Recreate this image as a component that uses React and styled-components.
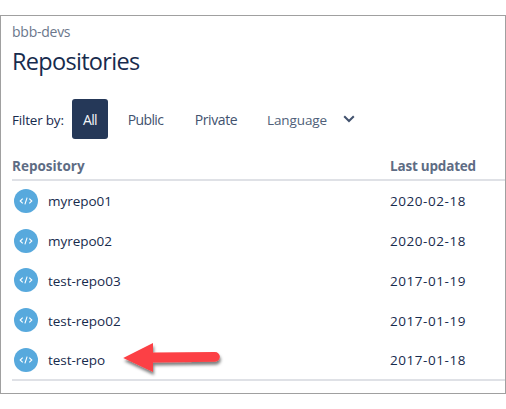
import React from "react";
import styled, { createGlobalStyle } from "styled-components";

const GlobalStyle = createGlobalStyle`
  * { box-sizing: border-box; }
  body { margin: 0; background: #fff; }
`;

const Page = styled.div`
  height: 409px;
  padding-top: 15px;
  font-family: "Open Sans", "Noto Sans", sans-serif;
  font-size: 13.5px;
  color: #172b4d;
  overflow: hidden;
`;

const Panel = styled.main`
  width: 506px;
  height: 379px;
  border: 1px solid #a0a0a0;
  padding: 6px 0 0 11px;
`;

const Label = styled.span`
  display: inline-block;
  white-space: nowrap;
  letter-spacing: ${(p) => p.$spacing || 0}px;
`;

const Owner = styled.div`
  height: 20px;
  line-height: 20px;
  font-size: 14px;
  color: #6b778c;
`;

const Title = styled.h1`
  margin: 2px 0 0;
  height: 34px;
  font-size: 23.5px;
  line-height: 34px;
  font-weight: 400;
`;

const Filters = styled.div`
  display: flex;
  align-items: center;
  height: 40px;
  margin-top: 21px;
`;

const FilterLabel = styled.div`
  width: 60px;
  padding-top: 1px;
`;

const FilterButton = styled.button`
  width: ${(p) => p.$width}px;
  height: 40px;
  padding: 0;
  border: 0;
  border-radius: 3px;
  font: inherit;
  font-size: 14px;
  text-align: center;
  color: ${(p) => (p.$active ? "#f4f5f7" : "#42526e")};
  background: ${(p) => (p.$active ? "#253858" : "transparent")};
`;

const LanguageSelect = styled.button`
  display: flex;
  align-items: center;
  justify-content: space-between;
  width: 88px;
  margin-left: 18px;
  padding: 1px 0 0;
  border: 0;
  background: none;
  font: inherit;
  color: #505f79;
`;

const Table = styled.section`
  margin-top: 17px;
  border-bottom: 2px solid #dfe1e6;
`;

const HeaderRow = styled.div`
  display: grid;
  grid-template-columns: 378px 1fr;
  height: 25px;
  line-height: 20px;
  border-bottom: 2px solid #dfe1e6;
  font-weight: 700;
  font-size: 13.5px;
  color: #5e6c84;
`;

const Row = styled.div`
  display: grid;
  grid-template-columns: 378px 1fr;
  align-items: center;
  height: ${(p) => p.$height}px;
`;

const RepoName = styled.div`
  display: flex;
  align-items: center;
  gap: 10px;
  padding-left: 2px;
`;

const CellText = styled(Label)`
  line-height: 18px;
  padding-top: ${(p) => p.$drop || 0}px;
`;

const Badge = styled.svg`
  display: block;
  width: 24px;
  height: 24px;
`;

const Chevron = styled.svg`
  display: block;
  width: 12px;
  height: 8px;
  margin-top: -2px;
`;

const Arrow = styled.svg`
  position: absolute;
  left: 116px;
  top: 336px;
  width: 112px;
  height: 46px;
  pointer-events: none;
`;

function RepoIcon() {
  return (
    <Badge viewBox="0 0 24 24">
      <circle cx="12" cy="12" r="12" fill="#57a9dd" />
      <path
        d="M8.7 9.6 6.2 12l2.5 2.4M15.3 9.6l2.5 2.4-2.5 2.4M13.1 8.6l-2.2 6.8"
        fill="none"
        stroke="#fff"
        strokeWidth="1.1"
      />
    </Badge>
  );
}

const repos = [
  { name: "myrepo01", date: "2020-02-18", height: 40, drop: 0 },
  { name: "myrepo02", date: "2020-02-18", height: 39, drop: 1 },
  { name: "test-repo03", date: "2017-01-19", height: 40, drop: 2 },
  { name: "test-repo02", date: "2017-01-19", height: 40, drop: 2 },
  { name: "test-repo", date: "2017-01-18", height: 39, drop: 0 },
];

export default function App() {
  return (
    <Page>
      <GlobalStyle />
      <Panel>
        <Owner><Label $spacing={-0.25}>bbb-devs</Label></Owner>
        <Title><Label $spacing={-0.7}>Repositories</Label></Title>
        <Filters>
          <FilterLabel><Label $spacing={-0.2}>Filter by:</Label></FilterLabel>
          <FilterButton $width={36} $active><Label $spacing={-0.7}>All</Label></FilterButton>
          <FilterButton $width={75}><Label $spacing={-0.6}>Public</Label></FilterButton>
          <FilterButton $width={66}><Label $spacing={-0.4}>Private</Label></FilterButton>
          <LanguageSelect>
            <Label $spacing={-0.1}>Language</Label>
            <Chevron viewBox="0 0 12 8">
              <path d="M1.2 1.2 6 6l4.8-4.8" fill="none" stroke="#42526e" strokeWidth="2" />
            </Chevron>
          </LanguageSelect>
        </Filters>
        <Table>
          <HeaderRow>
            <div><Label>Repository</Label></div>
            <div><Label $spacing={-0.2}>Last updated</Label></div>
          </HeaderRow>
          {repos.map((repo) => (
            <Row key={repo.name} $height={repo.height}>
              <RepoName>
                <RepoIcon />
                <CellText $spacing={-0.03} $drop={repo.drop}>{repo.name}</CellText>
              </RepoName>
              <CellText $spacing={0.55} $drop={repo.drop}>{repo.date}</CellText>
            </Row>
          ))}
        </Table>
      </Panel>
      <Arrow viewBox="0 0 112 46">
        <defs>
          <filter id="arrowShadow" x="-10%" y="-20%" width="120%" height="150%">
            <feDropShadow dx="1" dy="3" stdDeviation="1.5" floodColor="#000" floodOpacity="0.5" />
          </filter>
        </defs>
        <path
          d="M7.2 22 37 7v9.5l62-.5a4.8 4.8 0 0 1 0 9.7L37 26.5V36Z"
          fill="#fc4144"
          filter="url(#arrowShadow)"
        />
      </Arrow>
    </Page>
  );
}
